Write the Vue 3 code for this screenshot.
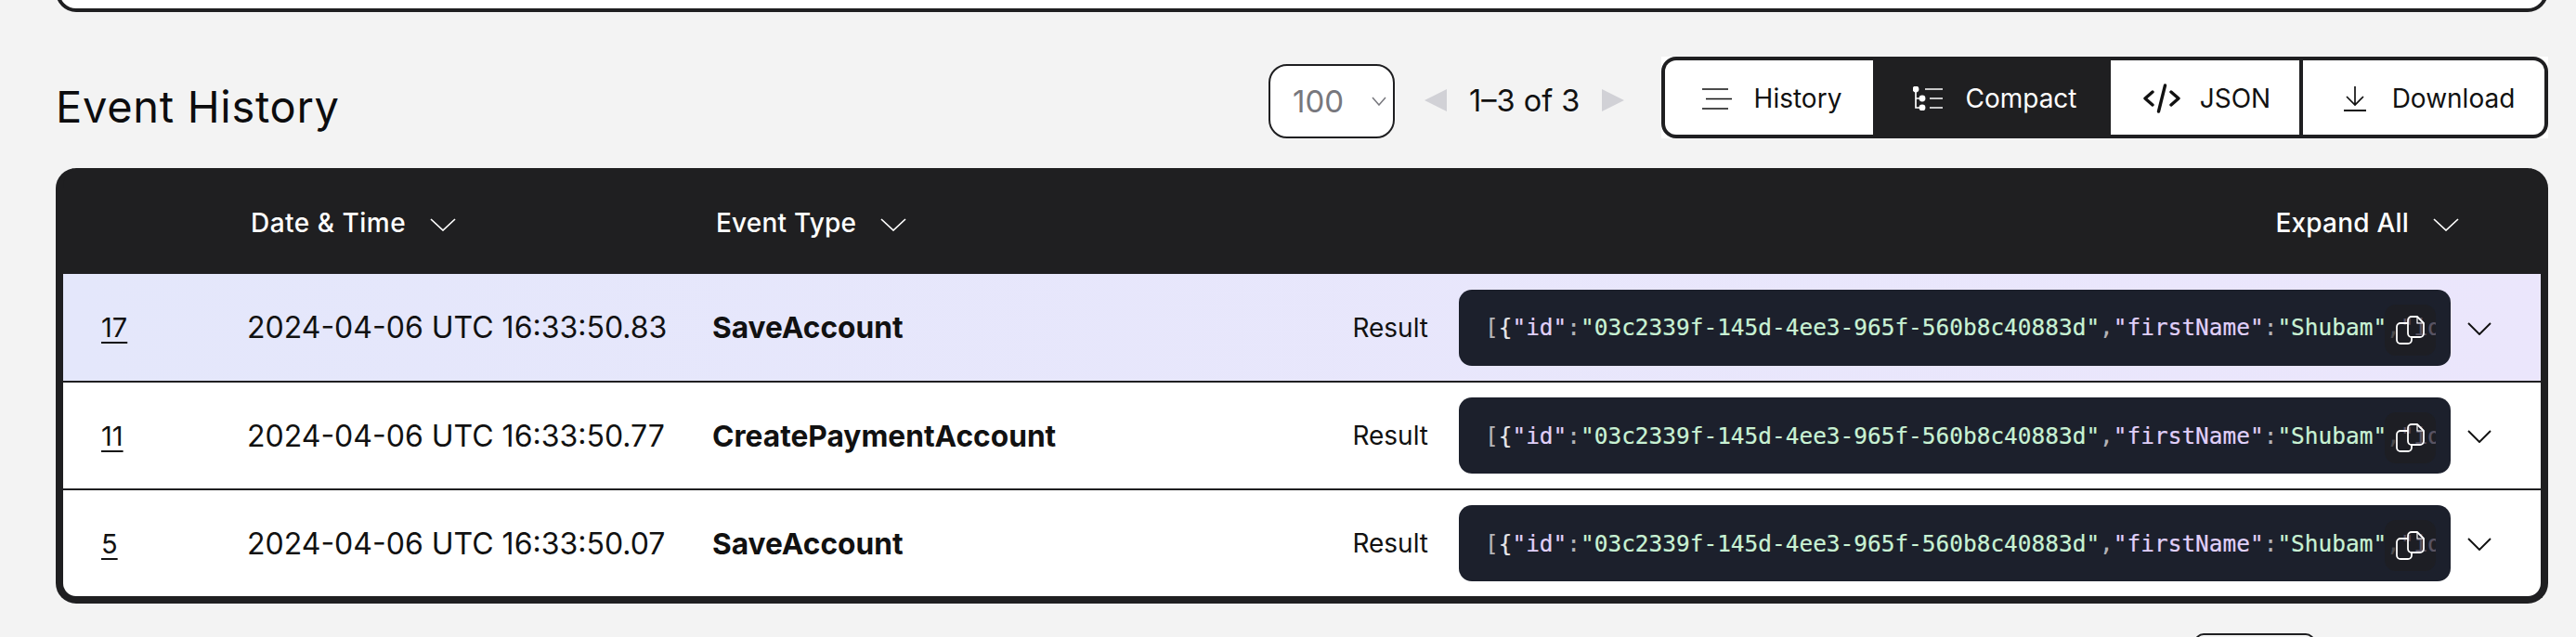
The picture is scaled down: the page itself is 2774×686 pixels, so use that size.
<script setup>
const rows = [
  { id: 17, date: '2024-04-06 UTC 16:33:50.83', type: 'SaveAccount', active: true },
  { id: 11, date: '2024-04-06 UTC 16:33:50.77', type: 'CreatePaymentAccount', active: false },
  { id: 5, date: '2024-04-06 UTC 16:33:50.07', type: 'SaveAccount', active: false },
]
</script>

<template>
  <div class="page">
    <div class="top-card"></div>

    <div class="toolbar">
      <h2 class="title">Event History</h2>
      <div class="controls">
        <div class="select">
          <span>100</span>
          <svg width="16" height="10" viewBox="0 0 16 10"><path d="M1 1l7 8 7-8" fill="none" stroke="#77777d" stroke-width="1.500"/></svg>
        </div>
        <div class="pager">
          <svg width="24" height="24" viewBox="0 0 24 24"><path d="M24 0v24L0 12z" fill="#d1d1d6"/></svg>
          <span class="pager-text">1–3 of 3</span>
          <svg width="24" height="24" viewBox="0 0 24 24"><path d="M0 0v24l24-12z" fill="#d1d1d6"/></svg>
        </div>
        <div class="modes-wrap">
          <div class="modes">
            <button class="mode m-history">
              <svg width="32" height="24" viewBox="0 0 32 24" fill="none" stroke="currentColor" stroke-width="1.700"><path d="M0 2h28M4 12.500h28M0 23h28"/></svg>
              History
            </button>
            <button class="mode m-compact">
              <svg width="32" height="26" viewBox="0 0 32 26" fill="none" stroke="currentColor" stroke-width="1.700"><path d="M13 3h19M18 13h14M18 23h14M3 5v18h6M3 13h6"/><circle cx="3" cy="3" r="2.600" fill="currentColor"/><circle cx="10" cy="13" r="2.600" fill="currentColor"/><circle cx="10" cy="23" r="2.600" fill="currentColor"/></svg>
              Compact
            </button>
            <button class="mode m-json">
              <svg width="40" height="32" viewBox="0 0 40 32" fill="none" stroke="currentColor" stroke-width="3.400" stroke-linecap="round" stroke-linejoin="round"><path d="M10 9l-8 7 8 7M30 9l8 7-8 7M23.500 2l-7 28"/></svg>
              JSON
            </button>
            <button class="mode m-download">
              <svg width="24" height="28" viewBox="0 0 24 28" fill="none" stroke="currentColor" stroke-width="1.700"><path d="M12 1v19M3 12l9 9 9-9"/><path d="M0 27h24" stroke-width="2"/></svg>
              Download
            </button>
          </div>
        </div>
      </div>
    </div>

    <div class="table">
      <div class="head">
        <span></span>
        <span class="th th-date">Date &amp; Time <svg class="chev" width="28" height="14" viewBox="0 0 28 14"><path d="M1 1l13 12L27 1" fill="none" stroke="currentColor" stroke-width="1.700"/></svg></span>
        <span class="th">Event Type <svg class="chev" width="28" height="14" viewBox="0 0 28 14"><path d="M1 1l13 12L27 1" fill="none" stroke="currentColor" stroke-width="1.700"/></svg></span>
        <span class="th">Expand All <svg class="chev" width="28" height="14" viewBox="0 0 28 14"><path d="M1 1l13 12L27 1" fill="none" stroke="currentColor" stroke-width="1.700"/></svg></span>
      </div>
      <div v-for="r in rows" :key="r.id" class="row" :class="{ active: r.active }">
        <a class="id">{{ r.id }}</a>
        <span class="date">{{ r.date }}</span>
        <span class="type">{{ r.type }}</span>
        <span class="result">Result</span>
        <div class="code">
          <div class="code-text"><span class="b">[</span><span class="p">{</span><span class="k">"id"</span><span class="b">:</span><span class="s">"03c2339f-145d-4ee3-965f-560b8c40883d"</span><span class="b">,</span><span class="k">"firstName"</span><span class="b">:</span><span class="s">"Shubam"</span><span class="b">,</span><span class="k">"id"</span></div>
          <div class="copy">
            <svg width="55" height="55" viewBox="0 0 55 55" fill="none" stroke="#fff" stroke-width="1.800" stroke-linejoin="round"><path d="M29 13h6l7 7v11a4 4 0 0 1-4 4h-9a4 4 0 0 1-4-4V17a4 4 0 0 1 4-4z"/><path d="M35 13v7h7" stroke-width="1.200"/><path d="M25 20h-8a4 4 0 0 0-4 4v14a4 4 0 0 0 4 4h8a4 4 0 0 0 4-4v-3"/></svg>
          </div>
        </div>
        <svg class="row-chev" width="26" height="14" viewBox="0 0 26 14"><path d="M1 1l12 12L25 1" fill="none" stroke="#111" stroke-width="1.900"/></svg>
      </div>
    </div>

    <div class="next-btn"></div>
  </div>
</template>

<style>
html, body { margin: 0; background: #f3f3f3; }
</style>

<style scoped>
.page {
  width: 2774px;
  height: 686px;
  overflow: hidden;
  background: #f3f3f3;
  box-sizing: border-box;
  padding: 0 30px 0 60px;
  font-family: Inter, "Liberation Sans", sans-serif;
  color: #111;
}
.top-card {
  height: 53px;
  margin-top: -40px;
  box-sizing: border-box;
  background: #fff;
  border: 4px solid #1f1f21;
  border-radius: 22px;
}
.toolbar {
  display: flex;
  justify-content: space-between;
  margin-top: 48px;
  height: 88px;
}
.title {
  margin: 26px 0 0;
  font-size: 47px;
  line-height: 56px;
  font-weight: 400;
  letter-spacing: 0.7px;
  color: #0c0c0e;
}
.controls {
  display: flex;
  align-items: stretch;
}
.select {
  width: 136px;
  height: 80px;
  margin-top: 8px;
  box-sizing: border-box;
  border: 2px solid #1f1f21;
  border-radius: 20px;
  background: #fff;
  display: flex;
  align-items: center;
  justify-content: space-between;
  padding: 0 7px 0 24px;
  font-size: 33px;
  color: #77777d;
}
.pager {
  display: flex;
  align-items: center;
  margin: 6px 0 0 32px;
  width: 216px;
  gap: 24px;
}
.pager-text {
  font-size: 32.500px;
  white-space: nowrap;
  color: #111;
}
.modes-wrap {
  margin-left: 39px;
  background: #fff;
}
.modes {
  display: flex;
  box-sizing: border-box;
  width: 955px;
  height: 88px;
  border: 4px solid #1f1f21;
  border-radius: 16px;
  overflow: hidden;
  background: #1f1f21;
}
.mode {
  display: flex;
  align-items: center;
  justify-content: center;
  gap: 24px;
  border: 0;
  padding: 2px 0 0;
  background: #fff;
  color: #111;
  font: 400 28px Inter, "Liberation Sans", sans-serif;
}
.m-history { width: 224px; padding-left: 6px; }
.m-compact { width: 256px; padding-left: 7px; background: #1f1f21; color: #fff; }
.m-json { width: 203px; padding-left: 4px; gap: 21px; }
.m-download { width: 260px; margin-left: 4px; padding-left: 12px; gap: 28px; }
.table {
  margin-top: 32px;
  width: 2684px;
  box-sizing: border-box;
  background: #1f1f21;
  border: solid #1f1f21;
  border-width: 0 8px 8px;
  border-radius: 22px;
  overflow: hidden;
}
.head {
  height: 114px;
  display: grid;
  grid-template-columns: 202px 501px 1fr auto;
  align-items: center;
  color: #fff;
  font-size: 28px;
  font-weight: 500;
  letter-spacing: 0.2px;
  padding: 4px 88px 0 0;
  box-sizing: border-box;
}
.th {
  display: flex;
  align-items: center;
  gap: 26px;
  white-space: nowrap;
}
.th-date { letter-spacing: 0.5px; }
.chev { margin-top: 4px; }
.row {
  height: 114px;
  display: flex;
  align-items: center;
  box-sizing: border-box;
  background: #fff;
  margin-bottom: 2px;
  padding-left: 41px;
}
.row:last-child { margin-bottom: 0; }
.row.active {
  height: 115px;
  background: linear-gradient(90deg, #e4e7fb, #ebe6fc);
}
.id {
  width: 157px;
  font-size: 29px;
  text-decoration: underline;
  text-underline-offset: 5px;
  text-decoration-thickness: 2px;
}
.date {
  width: 501px;
  font-size: 32px;
  white-space: nowrap;
}
.type {
  flex: 1;
  font-size: 31.700px;
  font-weight: 700;
}
.result {
  font-size: 28px;
  margin-right: 33px;
}
.code {
  position: relative;
  width: 1068px;
  height: 82px;
  box-sizing: border-box;
  background: #1c202c;
  border-radius: 14px;
  display: flex;
  align-items: center;
  padding-left: 28px;
  overflow: hidden;
}
.code-text {
  width: 1024px;
  overflow: hidden;
  white-space: nowrap;
  font-family: "DejaVu Sans Mono", monospace;
  font-size: 24.450px;
  -webkit-text-stroke: 0.2px currentColor;
}
.b { color: #b4b4b8; }
.p { color: #e6e6e8; }
.k { color: #e0d0fa; }
.s { color: #c9f2d4; }
.copy {
  position: absolute;
  left: 997px;
  top: 16px;
  width: 55px;
  height: 55px;
  border-radius: 12px;
  background: rgba(30, 30, 33, 0.7);
}
.copy svg { display: block; }
.row-chev { margin: 2px 53px 0 18px; }
.next-btn {
  width: 130px;
  height: 20px;
  margin: 32px 0 0 2303px;
  box-sizing: border-box;
  border: 2px solid #1f1f21;
  border-radius: 20px;
}
</style>
